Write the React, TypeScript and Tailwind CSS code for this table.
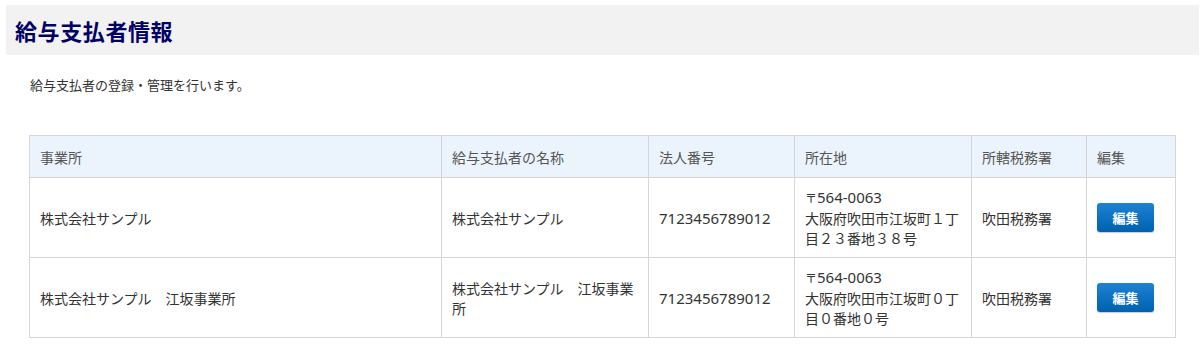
import React from "react"

type Payer = {
  office: string
  name: string
  corpNo: string
  zip: string
  address: string[]
  taxOffice: string
}

const payers: Payer[] = [
  {
    office: "株式会社サンプル",
    name: "株式会社サンプル",
    corpNo: "7123456789012",
    zip: "564-0063",
    address: ["大阪府吹田市江坂町１丁", "目２３番地３８号"],
    taxOffice: "吹田税務署",
  },
  {
    office: "株式会社サンプル　江坂事業所",
    name: "株式会社サンプル　江坂事業所",
    corpNo: "7123456789012",
    zip: "564-0063",
    address: ["大阪府吹田市江坂町０丁", "目０番地０号"],
    taxOffice: "吹田税務署",
  },
]

const font = { fontFamily: '"Noto Sans CJK JP", "Noto Sans", sans-serif' }

const App = () => {
  return (
    <div className="w-[1204px] h-[349px] bg-white text-[#333]" style={font}>
      {/* page title */}
      <div className="ml-[6px] mr-[5px] mt-[5px] h-[50px] bg-[#f2f2f2] flex items-center pl-[9px]">
        <h1 className="text-[22px] font-bold text-[#000066] tracking-[0.6px]">給与支払者情報</h1>
      </div>

      <div className="px-[29px]">
        <p className="pl-px pt-[20px] text-[13px] leading-[20px]">給与支払者の登録・管理を行います。</p>

        <table className="mt-[40px] w-[1146px] table-fixed border-collapse text-[14px] leading-[20px]">
          <colgroup>
            <col className="w-[412px]" />
            <col className="w-[207px]" />
            <col className="w-[146px]" />
            <col className="w-[177px]" />
            <col className="w-[115px]" />
            <col className="w-[89px]" />
          </colgroup>
          <thead>
            <tr className="h-[42px] bg-[#ebf4fc] text-[#555]">
              {["事業所", "給与支払者の名称", "法人番号", "所在地", "所轄税務署", "編集"].map((h) => (
                <th key={h} className="border border-[#d6d6d6] px-[10px] text-left font-normal">
                  {h}
                </th>
              ))}
            </tr>
          </thead>
          <tbody>
            {payers.map((p, i) => (
              <tr key={i} className="h-[80px]">
                <td className="border border-[#d6d6d6] px-[10px]">{p.office}</td>
                <td className="border border-[#d6d6d6] px-[10px]">{p.name}</td>
                <td className="border border-[#d6d6d6] px-[10px] text-[15px] font-['Noto_Sans',sans-serif]">
                  {p.corpNo}
                </td>
                <td className="border border-[#d6d6d6] px-[10px] py-[9px]">
                  <div className="flex items-baseline">
                    <span className="text-[12px]">〒</span>
                    <span className="text-[15px] font-['Noto_Sans',sans-serif]">{p.zip}</span>
                  </div>
                  {p.address.map((a) => (
                    <div key={a}>{a}</div>
                  ))}
                </td>
                <td className="border border-[#d6d6d6] px-[10px]">{p.taxOffice}</td>
                <td className="border border-[#d6d6d6] px-[10px]">
                  <button className="w-[57px] h-[29px] rounded-[3px] bg-gradient-to-b from-[#1b83d3] to-[#0061ae] text-white text-[13px] font-bold shadow-[0_1px_1px_rgba(0,0,0,0.2)]">
                    編集
                  </button>
                </td>
              </tr>
            ))}
          </tbody>
        </table>
      </div>
    </div>
  )
}

export default App
